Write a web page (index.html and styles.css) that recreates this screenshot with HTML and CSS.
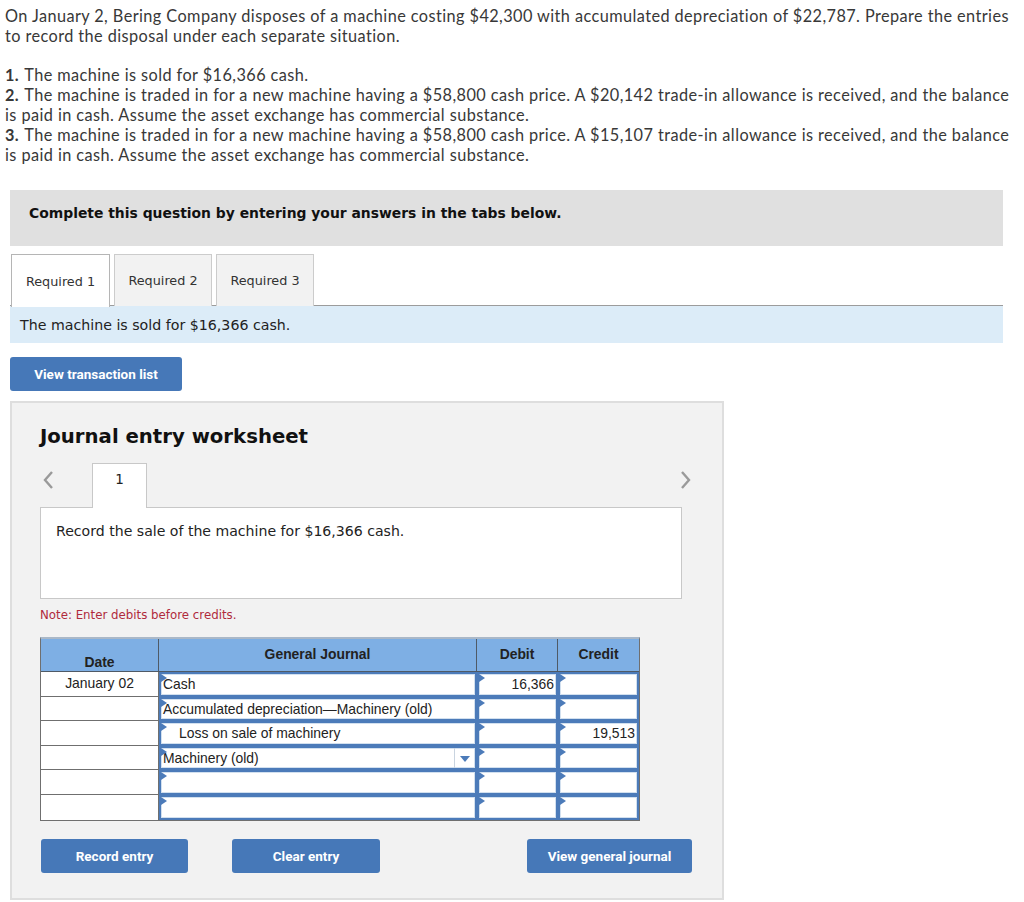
FILE: index.html
```html
<!DOCTYPE html>
<html>
<head>
<meta charset="utf-8">
<link rel="stylesheet" href="styles.css">
</head>
<body>
<div class="page">
  <div class="problem">
    <p class="intro">On January 2, Bering Company disposes of a machine costing $42,300 with accumulated depreciation of $22,787. Prepare the entries to record the disposal under each separate situation.</p>
    <div class="items">
      <p><b>1.</b> The machine is sold for $16,366 cash.</p>
      <p><b>2.</b> The machine is traded in for a new machine having a $58,800 cash price. A $20,142 trade-in allowance is received, and the balance is paid in cash. Assume the asset exchange has commercial substance.</p>
      <p><b>3.</b> The machine is traded in for a new machine having a $58,800 cash price. A $15,107 trade-in allowance is received, and the balance is paid in cash. Assume the asset exchange has commercial substance.</p>
    </div>
  </div>

  <div class="instructions">Complete this question by entering your answers in the tabs below.</div>

  <div class="tabs">
    <div class="tab active">Required 1</div>
    <div class="tab">Required 2</div>
    <div class="tab">Required 3</div>
  </div>
  <div class="tab-desc">The machine is sold for $16,366 cash.</div>

  <div class="list-row"><button class="btn btn-list">View transaction list</button></div>

  <div class="worksheet">
    <h2 class="ws-title">Journal entry worksheet</h2>
    <div class="nav">
      <svg class="chev" width="12" height="20" viewBox="0 0 12 20"><polyline points="10,2 3,10 10,18" fill="none" stroke="#9a9a9a" stroke-width="2.4"/></svg>
      <div class="num-tab">1</div>
      <div class="nav-spacer"></div>
      <svg class="chev" width="12" height="20" viewBox="0 0 12 20"><polyline points="2,2 9,10 2,18" fill="none" stroke="#9a9a9a" stroke-width="2.4"/></svg>
    </div>
    <div class="desc-box">Record the sale of the machine for $16,366 cash.</div>
    <div class="note">Note: Enter debits before credits.</div>

    <table class="journal">
      <colgroup>
        <col class="c-date"><col class="c-gj"><col class="c-amt"><col class="c-amt">
      </colgroup>
      <thead>
        <tr>
          <th class="h-date">Date</th>
          <th>General Journal</th>
          <th>Debit</th>
          <th class="h-last">Credit</th>
        </tr>
      </thead>
      <tbody>
        <tr>
          <td class="date">January 02</td>
          <td class="in">Cash</td>
          <td class="in num">16,366</td>
          <td class="in num"></td>
        </tr>
        <tr>
          <td class="date"></td>
          <td class="in">Accumulated depreciation—Machinery (old)</td>
          <td class="in num"></td>
          <td class="in num"></td>
        </tr>
        <tr>
          <td class="date"></td>
          <td class="in indent">Loss on sale of machinery</td>
          <td class="in num"></td>
          <td class="in num">19,513</td>
        </tr>
        <tr>
          <td class="date"></td>
          <td class="in select">Machinery (old)<span class="caret"></span></td>
          <td class="in num"></td>
          <td class="in num"></td>
        </tr>
        <tr>
          <td class="date"></td>
          <td class="in"></td>
          <td class="in num"></td>
          <td class="in num"></td>
        </tr>
        <tr>
          <td class="date"></td>
          <td class="in"></td>
          <td class="in num"></td>
          <td class="in num"></td>
        </tr>
      </tbody>
    </table>

    <div class="actions">
      <button class="btn btn-record">Record entry</button>
      <button class="btn btn-clear">Clear entry</button>
      <button class="btn btn-view">View general journal</button>
    </div>
  </div>
</div>
</body>
</html>
```

FILE: styles.css
```css
* { box-sizing: border-box; }

body {
  margin: 0;
  background: #ffffff;
  color: #333333;
}

.page {
  width: 1024px;
  padding: 6px 0 0 0;
}

/* problem text */
.problem {
  padding: 0 8px 0 5px;
  font-family: Lato, "Liberation Sans", sans-serif;
  font-size: 16.3px;
  letter-spacing: 0.42px;
  line-height: 20px;
  color: #383838;
}
.problem p { margin: 0; }
.intro { margin-bottom: 19px !important; }
.items b { font-weight: 700; margin-right: 1px; }

/* instruction box */
.instructions {
  margin: 25px 21px 0 10px;
  height: 56px;
  background: #e0e0e0;
  padding: 14px 19px 0 19px;
  font-family: "DejaVu Sans", Verdana, sans-serif;
  font-weight: bold;
  font-size: 13.9px;
  line-height: 18px;
  color: #111111;
}

/* tabs */
.tabs {
  margin: 8px 21px 0 10px;
  display: flex;
  gap: 4px;
  padding-left: 1px;
  border-bottom: 1px solid #9c9c9c;
  height: 52px;
}
.tab {
  width: 98px;
  height: 52px;
  background: #f2f2f2;
  border: 1px solid #cccccc;
  border-bottom: none;
  display: flex;
  align-items: center;
  justify-content: center;
  font-family: "DejaVu Sans", Verdana, sans-serif;
  font-size: 12.8px;
  color: #333333;
}
.tab.active {
  background: #ffffff;
  border-color: #b5b5b5;
  height: 53px;
  width: 99px;
}
.tab-desc {
  margin: 0 21px 0 10px;
  height: 37px;
  background: #dcecf8;
  padding: 0 10px;
  display: flex;
  align-items: center;
  font-family: "DejaVu Sans", Verdana, sans-serif;
  font-size: 14.2px;
  color: #222222;
}

/* buttons */
.btn {
  border: none;
  border-radius: 3px;
  background: #4678b8;
  color: #ffffff;
  font-family: Roboto, "Liberation Sans", sans-serif;
  font-weight: bold;
  font-size: 13.5px;
  letter-spacing: 0;
  height: 34px;
  padding: 0;
  cursor: pointer;
}
.list-row {
  margin: 14px 0 0 10px;
}
.btn-list { width: 172px; display: block; }

/* worksheet */
.worksheet {
  margin: 10px 0 0 10px;
  width: 714px;
  background: #f2f2f2;
  border: 2px solid #dedede;
  padding: 20px 0 25px 28px;
}
.ws-title {
  margin: 0;
  font-family: "DejaVu Sans", Verdana, sans-serif;
  font-weight: bold;
  font-size: 19.7px;
  line-height: 28px;
  color: #111111;
}
.nav {
  margin-top: 12px;
  width: 652px;
  height: 44px;
  display: flex;
  align-items: center;
  position: relative;
  z-index: 1;
}
.chev { display: block; flex: none; }
.nav .chev:first-child { margin-left: 2px; margin-top: -10px; }
.nav .chev:last-child { margin-top: -10px; }
.num-tab {
  margin-left: 38px;
  align-self: flex-end;
  width: 55px;
  height: 45px;
  background: #ffffff;
  border: 1px solid #c8c8c8;
  border-bottom: none;
  margin-bottom: -1px;
  padding-top: 7px;
  text-align: center;
  font-family: "DejaVu Sans", Verdana, sans-serif;
  font-size: 13.5px;
  line-height: 16px;
  color: #222222;
}
.nav-spacer { flex: 1; }
.desc-box {
  width: 642px;
  height: 92px;
  background: #ffffff;
  border: 1px solid #c8c8c8;
  padding: 14px 15px;
  font-family: "DejaVu Sans", Verdana, sans-serif;
  font-size: 14.1px;
  line-height: 18px;
  color: #222222;
}
.note {
  margin-top: 8px;
  font-family: "DejaVu Sans", Verdana, sans-serif;
  font-size: 11.8px;
  line-height: 16px;
  color: #b02a3c;
}

/* journal table */
.journal {
  margin-top: 14px;
  border-collapse: separate;
  border-spacing: 0;
  border: 1px solid #6f6f6f;
  border-top: 2px solid #aab8c8;
  font-family: "Liberation Sans", Arial, sans-serif;
  font-size: 13.9px;
  color: #222222;
  background: #ffffff;
  table-layout: fixed;
  width: 598px;
}
.c-date { width: 118px; }
.c-gj { width: 318px; }
.c-amt { width: 81px; }
.journal th {
  background: #7eafe4;
  height: 33px;
  font-weight: bold;
  font-size: 13.9px;
  color: #222222;
  border-right: 1px solid #4f5a66;
  border-bottom: 1px solid #4f5a66;
  vertical-align: middle;
  padding: 0 0 2px 0;
}
.journal th.h-last { border-right: none; }
.journal th.h-date { vertical-align: bottom; padding-bottom: 1px; }
.journal td {
  height: 24.6px;
  padding: 0;
  white-space: nowrap;
  overflow: hidden;
}
.journal td.date {
  text-align: center;
  border-right: 1px solid #6f6f6f;
  border-bottom: 1px solid #6f6f6f;
  padding-bottom: 2px;
}
.journal tr:last-child td.date { border-bottom: none; }
.journal td.in {
  position: relative;
  border: 2px solid #4c7bb9;
  box-shadow: inset 0 0 0 1px #d2e0ef;
  padding: 0 2px;
  background: #ffffff;
}
.journal td.in::before {
  content: "";
  position: absolute;
  left: 0;
  top: 0;
  border-top: 4px solid transparent;
  border-bottom: 4px solid transparent;
  border-left: 6px solid #4c7bb9;
}
.journal td.num { text-align: right; }
.journal td.indent { padding-left: 18px; }
.journal td.select { padding-right: 24px; }
.caret {
  position: absolute;
  right: 0;
  top: 0;
  bottom: 0;
  width: 21px;
  border-left: 1px solid #c9d4e0;
}
.caret::after {
  content: "";
  position: absolute;
  left: 5px;
  top: 8px;
  border-left: 5px solid transparent;
  border-right: 5px solid transparent;
  border-top: 6px solid #4c7bb9;
}

/* actions */
.actions {
  margin-top: 18px;
  display: flex;
  padding-left: 1px;
}
.btn-record { width: 147px; }
.btn-clear { width: 148px; margin-left: 44px; }
.btn-view { width: 165px; margin-left: 147px; }
```
